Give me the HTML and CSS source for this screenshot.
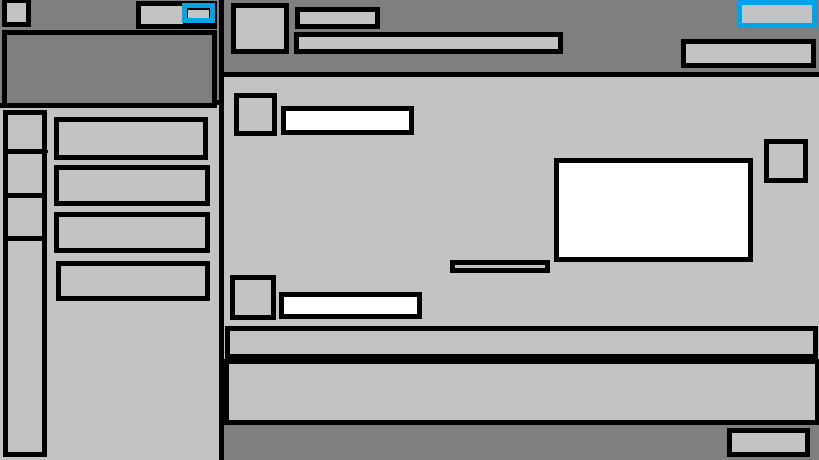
FILE: index.html
```html
<!DOCTYPE html>
<html lang="en">
<head>
<meta charset="utf-8">
<title>Messenger wireframe</title>
<link rel="stylesheet" href="styles.css">
</head>
<body>
<div class="app">
  <aside class="sidebar">
    <div class="side-top">
      <header class="side-head">
        <div class="side-tools">
          <button class="menu" type="button" aria-label="Menu"></button>
          <div class="search">
            <input class="search-input" type="text" aria-label="Search">
            <button class="search-go" type="button" aria-label="Go"></button>
          </div>
        </div>
        <div class="profile"></div>
      </header>
      <div class="side-join"></div>
    </div>
    <div class="side-body">
      <nav class="rail" aria-label="Sections">
        <button class="tab tab-first" type="button" aria-label="Chats"></button>
        <button class="tab tab-second" type="button" aria-label="Contacts"></button>
        <button class="tab tab-third" type="button" aria-label="Groups"></button>
      </nav>
      <div class="contacts">
        <button class="contact contact-active" type="button" aria-label="Contact 1"></button>
        <button class="contact" type="button" aria-label="Contact 2"></button>
        <button class="contact" type="button" aria-label="Contact 3"></button>
        <button class="contact contact-last" type="button" aria-label="Contact 4"></button>
      </div>
    </div>
  </aside>
  <main class="main">
    <header class="chat-head">
      <div class="chat-avatar"></div>
      <div class="chat-title">
        <div class="chat-name"></div>
        <div class="chat-status"></div>
      </div>
      <div class="chat-actions">
        <button class="window-button" type="button" aria-label="Window"></button>
        <button class="action-button" type="button" aria-label="Actions"></button>
      </div>
    </header>
    <section class="messages" aria-label="Messages">
      <div class="message message-in">
        <div class="avatar"></div>
        <div class="bubble"></div>
      </div>
      <div class="message message-out">
        <div class="stamp"></div>
        <div class="bubble bubble-large"></div>
        <div class="avatar avatar-own"></div>
      </div>
      <div class="message message-reply">
        <div class="avatar avatar-reply"></div>
        <div class="bubble bubble-reply"></div>
      </div>
    </section>
    <form class="composer">
      <div class="toolbar"></div>
      <textarea class="editor" aria-label="Message"></textarea>
      <div class="composer-foot">
        <button class="send" type="button" aria-label="Send"></button>
      </div>
    </form>
  </main>
</div>
</body>
</html>
```

FILE: styles.css
```css
:root {
  --light: #c3c3c3;
  --dark: #7f7f7f;
  --blue: #00a2e8;
  --line: 5px solid #000;
}

* {
  box-sizing: border-box;
}

body {
  margin: 0;
  background: var(--light);
  font: 12px "Liberation Sans", sans-serif;
}

button,
input,
textarea {
  display: block;
  margin: 0;
  padding: 0;
  border: var(--line);
  border-radius: 0;
  background: var(--light);
  font: inherit;
}

.app {
  display: grid;
  grid-template-columns: 224px minmax(0, 1fr);
  min-height: 100vh;
}

/* Sidebar */
.sidebar {
  display: flex;
  flex-direction: column;
  border-right: var(--line);
}

.side-top {
  display: flex;
  align-items: flex-start;
}

.side-head {
  flex: 1;
  padding-left: 2px;
  border-bottom: var(--line);
  background: var(--dark);
}

.side-join {
  width: 2px;
  height: 105px;
  border-bottom: var(--line);
  background: var(--dark);
}

.side-tools {
  display: flex;
  justify-content: space-between;
  align-items: flex-start;
  height: 30px;
}

.menu {
  width: 29px;
  height: 27px;
  border-top-width: 3px;
}

.search {
  display: flex;
  width: 81px;
  height: 28px;
  margin-top: 1px;
  background: #000;
}

.search-input {
  width: 52px;
}

.search-go {
  width: 33px;
  height: 20px;
  margin: 2px 0 0 -6px;
  border-color: var(--blue);
  box-shadow: inset 0 2px #000, inset 1px 0 #000, inset -1px 0 #000;
}

.profile {
  height: 73px;
  border: var(--line);
  border-bottom: 0;
}

.side-body {
  display: flex;
  flex: 1;
  gap: 7px;
  padding: 2px 9px 3px 3px;
}

.rail {
  width: 44px;
  border: var(--line);
}

.tab {
  position: relative;
  width: 100%;
  height: 44px;
  border-width: 0 0 5px;
}

.tab-first {
  height: 39px;
}

.tab-third {
  height: 43px;
}

.tab-first::after {
  content: "";
  position: absolute;
  right: -6px;
  bottom: -4px;
  width: 1px;
  height: 3px;
  background: #000;
}

.contacts {
  display: flex;
  flex: 1;
  flex-direction: column;
  gap: 6px;
  padding-top: 7px;
}

.contact {
  height: 41px;
}

.contact-active {
  height: 43px;
  margin: 0 2px -1px 0;
}

.contact-last {
  height: 40px;
  margin: 2px 0 0 2px;
}

/* Conversation */
.main {
  display: flex;
  flex-direction: column;
}

.chat-head {
  display: flex;
  height: 77px;
  padding-left: 7px;
  border-bottom: var(--line);
  background: var(--dark);
}

.chat-avatar {
  width: 58px;
  height: 51px;
  margin-top: 3px;
  border: var(--line);
  background: var(--light);
}

.chat-title {
  display: flex;
  flex: 0 1 269px;
  flex-direction: column;
  gap: 3px;
  margin-left: 5px;
  padding-top: 7px;
}

.chat-name,
.chat-status {
  height: 22px;
  border: var(--line);
  background: var(--light);
}

.chat-name {
  width: 85px;
  margin-left: 1px;
}

.chat-actions {
  display: flex;
  flex-direction: column;
  align-items: flex-end;
  gap: 11px;
  margin-left: auto;
  padding-right: 2px;
}

.window-button {
  width: 80px;
  height: 28px;
  border-color: var(--blue);
}

.action-button {
  width: 135px;
  height: 29px;
  margin-right: 1px;
}

.messages {
  flex: 1;
  padding: 16px 11px 6px 6px;
}

.message {
  display: flex;
  align-items: flex-end;
  gap: 4px;
}

.message-in {
  padding-left: 4px;
}

.message-out {
  justify-content: flex-end;
  margin: 3px 0 2px;
}

.message-reply {
  gap: 3px;
}

.avatar {
  width: 43px;
  height: 43px;
  border: var(--line);
}

.avatar-own {
  align-self: flex-start;
  width: 44px;
  height: 44px;
  margin-left: 7px;
}

.avatar-reply {
  width: 46px;
  height: 45px;
}

.bubble {
  width: 133px;
  height: 29px;
  margin-bottom: 1px;
  border: var(--line);
  background: #fff;
}

.bubble-large {
  width: 199px;
  height: 104px;
  margin: 19px 0 11px;
}

.bubble-reply {
  width: 143px;
  height: 27px;
}

.stamp {
  width: 100px;
  height: 13px;
  border: var(--line);
}

/* Composer */
.toolbar {
  height: 33px;
  margin: 0 1px;
  border: var(--line);
}

.editor {
  width: 100%;
  height: 66px;
  border-right-width: 4px;
  resize: none;
}

.composer-foot {
  display: flex;
  justify-content: flex-end;
  height: 35px;
  padding: 3px 9px;
  background: var(--dark);
}

.send {
  width: 83px;
  height: 29px;
}
```
